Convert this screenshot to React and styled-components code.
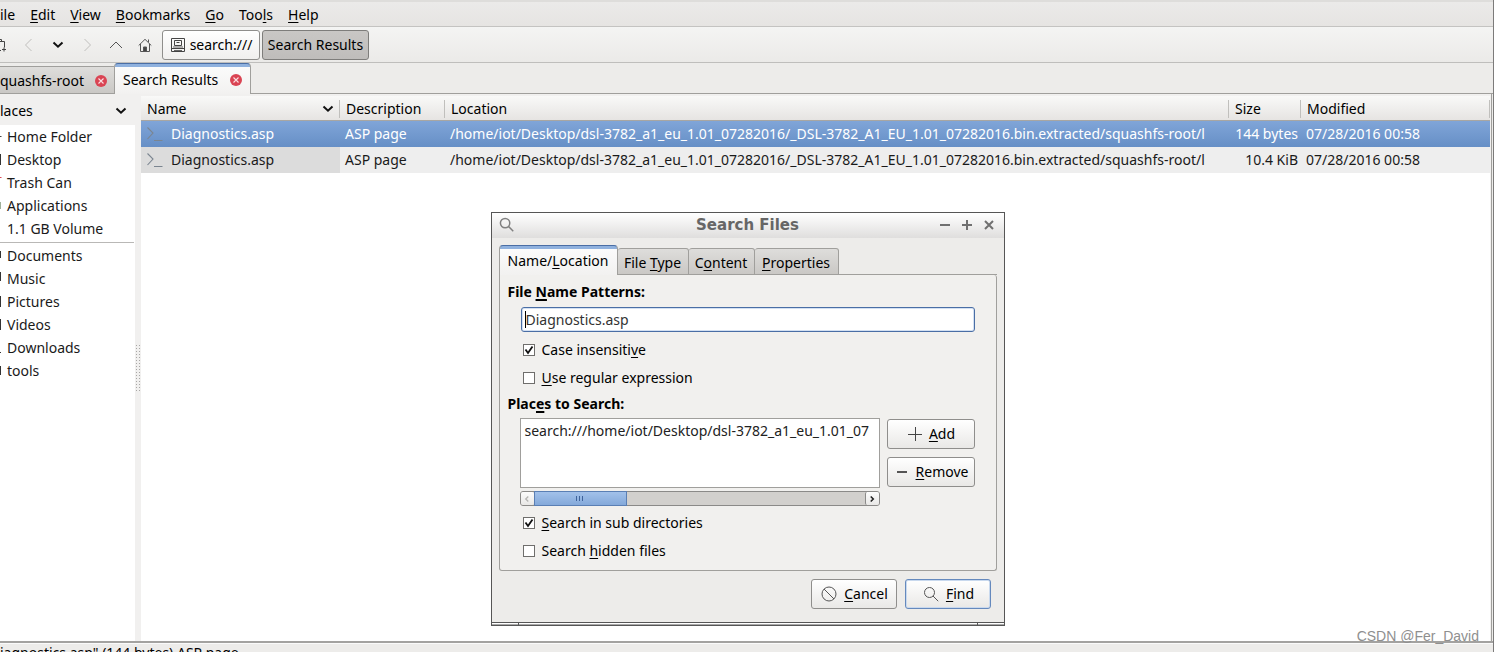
import React from "react";
import styled, { createGlobalStyle, css } from "styled-components";

const Global = createGlobalStyle`
  * { box-sizing: border-box; }
  body { margin: 0; overflow: hidden; }
  body, button, input, table {
    font-family: "Noto Sans", "Open Sans", sans-serif;
    font-size: 14px;
    line-height: 20px;
    color: #1a1a1a;
  }
  u { text-underline-offset: 2px; text-decoration-thickness: 1px; }
  svg { display: block; flex: none; }
`;

const Window = styled.div`
  position: relative;
  height: 100vh;
  display: flex;
  flex-direction: column;
  overflow: hidden;
  background: #edecea;
  border-right: 1px solid #7c7b7a;
`;

const MenuBar = styled.nav`
  display: flex;
  flex: none;
  align-items: flex-start;
  gap: 15px;
  height: 27px;
  padding-top: 3px;
  border-top: 2px solid #dedddb;
  border-bottom: 1px solid #c4c3c1;
  background: linear-gradient(#ebeae9, #e6e4e2);
`;

const MenuItem = styled.button`
  padding: 0;
  border: 0;
  background: none;
  color: #000;
`;

const Toolbar = styled.div`
  display: flex;
  flex: none;
  align-items: center;
  height: 36px;
  border-bottom: 1px solid #bfbebc;
  background: linear-gradient(#f4f4f3, #ebeae8);
`;

const ToolButton = styled.button`
  display: flex;
  align-items: center;
  justify-content: ${(p) => (p.$cut ? "flex-start" : "center")};
  width: ${(p) => (p.$cut ? 14 : 29)}px;
  height: 30px;
  padding: 0;
  border: 0;
  background: none;
`;

const PathBar = styled.div`
  display: flex;
  gap: 2px;
  margin-left: 3px;
`;

const PathButton = styled.button`
  display: flex;
  align-items: center;
  justify-content: center;
  gap: 4px;
  width: ${(p) => (p.$active ? 107 : 98)}px;
  height: 30px;
  padding: 0;
  white-space: nowrap;
  color: #000;
  border: 1px solid ${(p) => (p.$active ? "#7e7d7b" : "#8f8e8c")};
  border-radius: 3px;
  background: ${(p) =>
    p.$active ? "linear-gradient(#c9c7c5, #bfbdbb)" : "linear-gradient(#ffffff, #f0efee)"};
`;

const TabRow = styled.div`
  display: flex;
  flex: none;
  align-items: flex-end;
  height: 31px;
`;

const tabFace = css`
  border: 1px solid #a09f9c;
  border-radius: 3px 3px 0 0;
  background: linear-gradient(#dedddb, #cac8c5);
`;

const activeFace = css`
  border: 1px solid #a09f9c;
  border-top-color: #4a6ea5;
  border-bottom: 0;
  border-radius: 4px 4px 0 0;
  background: linear-gradient(#8fb1de 0 3px, #fbfbfb 3px, #f2f1f0);
`;

const FileTab = styled.button`
  ${(p) => (p.$active ? activeFace : tabFace)}
  display: flex;
  align-items: center;
  gap: 9px;
  width: ${(p) => (p.$active ? 137 : 114)}px;
  height: ${(p) => (p.$active ? 31 : 28)}px;
  padding: ${(p) => (p.$active ? "2px 8px 0 8px" : "1px 7px 0 0")};
  justify-content: space-between;
  white-space: nowrap;
  color: #000;
  ${(p) => !p.$active && "border-left: 0; border-right: 0; border-radius: 0;"}
`;

const TabFill = styled.div`
  flex: 1;
  height: 1px;
  background: #a09f9c;
`;

const Main = styled.div`
  display: flex;
  flex: 1;
  min-height: 0;
  margin-right: 1px;
  border-right: 1px solid #a09f9c;
  background: #f1f0ef;
`;

const SidePane = styled.aside`
  display: flex;
  flex-direction: column;
  width: 135px;
`;

const PaneHeader = styled.div`
  display: flex;
  align-items: center;
  justify-content: space-between;
  height: 31px;
  padding: 2px 7px 0 0;
  color: #000;
`;

const PlaceList = styled.ul`
  flex: 1;
  margin: 0;
  padding: 0;
  list-style: none;
  background: #fff;
`;

const Place = styled.li`
  display: flex;
  align-items: center;
  gap: 5px;
  height: 23px;
  white-space: nowrap;
  ${(p) =>
    p.$divided &&
    css`
      height: 25px;
      margin: 2px 1px 0 0;
      padding-top: 1px;
      border-top: 1px solid #b9b8b6;
    `}
`;

const Sash = styled.div`
  display: flex;
  align-items: center;
  justify-content: flex-start;
  width: 6px;
`;

const ListPane = styled.main`
  flex: 1;
  min-width: 0;
  margin-right: 1px;
  padding-top: 2px;
  background: linear-gradient(#f1f0ef 0 2px, #fff 2px);
`;

const Files = styled.table`
  width: 100%;
  table-layout: fixed;
  border-collapse: separate;
  border-spacing: 0;
`;

const Col = styled.col`
  width: ${(p) => p.$w};
`;

const Th = styled.th`
  height: 25px;
  padding: 1px 5px 0 6px;
  text-align: left;
  font-weight: 400;
  color: #000;
  white-space: nowrap;
  border-bottom: 1px solid #a8a6a2;
  background:
    linear-gradient(#c0bfbc, #c0bfbc) right 4px / 1px 18px no-repeat,
    linear-gradient(#f9f9f8, #e6e4e2);
`;

const HeadCell = styled.span`
  display: flex;
  align-items: center;
  justify-content: space-between;
`;

const Row = styled.tr`
  color: ${(p) => (p.$selected ? "#fff" : "#1a1a1a")};
  background: ${(p) => (p.$selected ? "linear-gradient(#80a5d8, #668fc6)" : "#eeeeee")};
  td:first-child { background: ${(p) => (p.$selected ? "none" : "#dcdcdc")}; }
`;

const Td = styled.td`
  height: 26px;
  padding: 0 0 0 5px;
  overflow: hidden;
  white-space: nowrap;
  text-align: ${(p) => (p.$right ? "right" : "left")};
  ${(p) => p.$right && "padding: 0 3px 0 0;"}
`;

const NameCell = styled.span`
  display: flex;
  align-items: center;
  gap: 8px;
`;

const StatusBar = styled.footer`
  flex: none;
  height: 11px;
  border-top: 2px solid #a3a2a0;
  background: linear-gradient(#fafafa 0 1px, #edecea 1px);
  white-space: nowrap;
  color: #000;
`;

const Watermark = styled.div`
  position: absolute;
  right: 14px;
  bottom: 6px;
  font-family: "Liberation Sans", sans-serif;
  font-size: 14px;
  line-height: 20px;
  color: #8f8f8f;
`;

const Dialog = styled.section`
  position: absolute;
  top: 212px;
  left: calc(50% - 256px);
  width: 514px;
  border: 1px solid #565656;
  background: #edecea;
`;

const TitleBar = styled.header`
  display: flex;
  align-items: center;
  justify-content: space-between;
  height: 25px;
  padding: 0 8px 2px 7px;
  background: linear-gradient(#ffffff, #dfdedd);
`;

const Title = styled.h1`
  margin: 0 0 0 42px;
  font: bold 15px/20px "DejaVu Sans", sans-serif;
  color: #666;
`;

const Controls = styled.div`
  display: flex;
  gap: 10px;
  button { padding: 0; border: 0; background: none; }
`;

const DialogBody = styled.div`
  padding: 7px 7px 13px;
`;

const DialogTabs = styled.div`
  display: flex;
  align-items: flex-end;
  height: 30px;
`;

const DialogTab = styled.button`
  ${(p) => (p.$active ? activeFace : tabFace)}
  width: ${(p) => p.$w}px;
  height: ${(p) => (p.$active ? 30 : 27)}px;
  padding: ${(p) => (p.$active ? "0" : "2px 0 0")};
  white-space: nowrap;
  color: #000;
  ${(p) => !p.$active && "border-left: 0;"}
`;

const Panel = styled.div`
  height: 296px;
  padding: 7px 21px 0 8px;
  border: 1px solid #a09f9c;
  border-top: 0;
  border-radius: 0 3px 3px 3px;
  background: #f1f0ee;
`;

const Legend = styled.label`
  display: block;
  height: 20px;
  font-weight: 700;
  color: #000;
  u { text-decoration-thickness: 2px; }
`;

const Group = styled.div`
  padding-left: 12px;
`;

const Field = styled.div`
  position: relative;
  margin: 5px 0 4px 1px;
`;

const TextInput = styled.input`
  display: block;
  width: 100%;
  height: 25px;
  padding: 0 4px;
  border: 1px solid #4a6ea5;
  border-radius: 3px;
  outline: 0;
  color: #333;
  background: #fff;
  box-shadow: inset 0 0 0 1px #d3e0f2;
`;

const Caret = styled.span`
  position: absolute;
  top: 4px;
  left: 4px;
  width: 1px;
  height: 17px;
  background: #000;
`;

const Check = styled.label`
  display: flex;
  align-items: center;
  gap: 7px;
  height: 28px;
  padding-left: 3px;
  color: #000;
`;

const Tick = styled.input`
  appearance: none;
  width: 12px;
  height: 12px;
  margin: 0;
  border: 1px solid #6f6e6c;
  background: #fff;
`;

const TickBox = styled.span`
  position: relative;
  display: flex;
  svg { position: absolute; inset: 0; pointer-events: none; }
`;

const PlacesRow = styled.div`
  display: flex;
  gap: 7px;
  margin: 4px 0 3px;
`;

const PlacesBox = styled.div`
  flex: 1;
  min-width: 0;
`;

const PathList = styled.div`
  height: 70px;
  padding: 2px 4px;
  overflow: hidden;
  white-space: nowrap;
  border: 1px solid #a09f9c;
  color: #222;
  background: #fff;
`;

const ScrollBar = styled.div`
  display: flex;
  height: 15px;
  margin-top: 3px;
  border: 1px solid #8b8a88;
  border-radius: 3px;
  background: #d2d0cd;
`;

const ScrollEnd = styled.button`
  display: flex;
  align-items: center;
  justify-content: center;
  width: ${(p) => (p.$last ? 14 : 13)}px;
  padding: 0;
  border: 0;
  border-radius: 2px;
  background: linear-gradient(#fcfcfc, #e9e8e6);
  ${(p) => p.$last && "margin-left: auto; border-left: 1px solid #8b8a88;"}
`;

const Thumb = styled.div`
  display: flex;
  align-items: center;
  justify-content: center;
  width: 93px;
  height: 15px;
  margin-top: -1px;
  border: 1px solid #5a7fb4;
  background: linear-gradient(#a2c1ea, #84a9da);
`;

const ButtonColumn = styled.div`
  display: flex;
  flex-direction: column;
  gap: 8px;
  margin-top: 1px;
`;

const PushButton = styled.button`
  display: flex;
  align-items: center;
  justify-content: center;
  gap: 7px;
  width: ${(p) => p.$w}px;
  height: 30px;
  padding: 0 0 0 2px;
  white-space: nowrap;
  color: #000;
  border: 1px solid ${(p) => (p.$default ? "#6589bd" : "#8f8e8c")};
  border-radius: 3px;
  background: linear-gradient(#ffffff, #e9e8e6);
  box-shadow: ${(p) => (p.$default ? "inset 0 0 0 1px #c9d9ee" : "none")};
`;

const Actions = styled.div`
  display: flex;
  justify-content: flex-end;
  gap: 8px;
  margin: 8px 6px 0 0;
`;

const Grip = styled.div`
  display: flex;
  justify-content: space-between;
  height: 3px;
  border-top: 1px solid #565656;
  background: linear-gradient(#fff 0 1px, #a9a9a9 1px);
  &::before, &::after {
    content: "";
    width: 26px;
    border-right: 1px solid #565656;
  }
  &::after { border-right: 0; border-left: 1px solid #565656; }
`;

const Chevron = ({ d, c = "#444", w = 1, s = 14 }) => (
  <svg width={s} height="14" viewBox="0 0 14 14" fill="none" stroke={c} strokeWidth={w}>
    <path d={d} />
  </svg>
);

const DownArrow = () => <Chevron d="M2.5 4.5 7 8.7l4.5-4.2" c="#111" w={2} />;

const CloseBadge = () => (
  <svg width="12" height="12" viewBox="0 0 12 12">
    <circle cx="6" cy="6" r="6" fill="#da4453" />
    <path d="M3.5 3.5l5 5M8.5 3.5l-5 5" stroke="#fbdfe2" strokeWidth="1.1" />
  </svg>
);

const Prompt = () => (
  <svg width="17" height="16" viewBox="0 0 17 16" fill="none" stroke="#7b8590" strokeWidth="1.1">
    <path d="M1.5 1.500l5.500 5.500-5.500 6M8 14.500h8.500" />
  </svg>
);

const Magnifier = ({ size = 16, w = 1, c = "#555" }) => (
  <svg width={size} height={size} viewBox="0 0 16 16" fill="none" stroke={c} strokeWidth={w}>
    <circle cx="6.500" cy="6.500" r="5" />
    <path d="M10 10l5.200 5.200" />
  </svg>
);

const TickMark = () => (
  <svg width="12" height="12" viewBox="0 0 12 12" fill="none" stroke="#111" strokeWidth="1.800">
    <path d="M2.500 5.500l2.500 3.500 4.500-6.500" />
  </svg>
);

const CheckRow = ({ checked, children }) => (
  <Check>
    <TickBox>
      <Tick type="checkbox" defaultChecked={checked} />
      {checked && <TickMark />}
    </TickBox>
    <span>{children}</span>
  </Check>
);

const PATH =
  "/home/iot/Desktop/dsl-3782_a1_eu_1.01_07282016/_DSL-3782_A1_EU_1.01_07282016.bin.extracted/squashfs-root/l";

const files = [
  { name: "Diagnostics.asp", size: "144 bytes", selected: true },
  { name: "Diagnostics.asp", size: "10.4 KiB" },
];

const places = [
  ["Home Folder", "M0 7.500h1.500", "#444"],
  ["Desktop", "M0.500 2v11", "#333"],
  ["Trash Can", "M0 2.500h1.500", "#da4453"],
  ["Applications", "M0.500 4v7", "#9fb09a"],
  ["1.1 GB Volume", "", "none"],
  ["Documents", "M0.500 3v7", "#333"],
  ["Music", "M0.500 1v9", "#333"],
  ["Pictures", "M0.500 2v11", "#333"],
  ["Videos", "M0.500 2v11", "#333"],
  ["Downloads", "M0 12.500h1", "#333"],
  ["tools", "M0.500 3v9", "#333"],
];

export default function App() {
  return (
    <>
      <Global />
      <Window>
        <MenuBar>
          <MenuItem>ile</MenuItem>
          <MenuItem><u>E</u>dit</MenuItem>
          <MenuItem><u>V</u>iew</MenuItem>
          <MenuItem><u>B</u>ookmarks</MenuItem>
          <MenuItem><u>G</u>o</MenuItem>
          <MenuItem>Too<u>l</u>s</MenuItem>
          <MenuItem><u>H</u>elp</MenuItem>
        </MenuBar>
        <Toolbar>
          <ToolButton $cut aria-label="New tab">
            <svg width="7" height="16" viewBox="0 0 7 16" fill="none" stroke="#444">
              <path d="M0 2.500h1.500v2M0 4.500h4.500v6M0 13.500h1M2 12.500h4M4 10.500v4" />
            </svg>
          </ToolButton>
          <ToolButton aria-label="Back"><Chevron d="M9.500 1 3.500 7l6 6" c="#c0bfbd" /></ToolButton>
          <ToolButton aria-label="History"><DownArrow /></ToolButton>
          <ToolButton aria-label="Forward"><Chevron d="M4.500 1l6 6-6 6" c="#c0bfbd" /></ToolButton>
          <ToolButton aria-label="Up"><Chevron d="M1 10l6-6 6 6" c="#555" /></ToolButton>
          <ToolButton aria-label="Home">
            <svg width="14" height="14" viewBox="0 0 14 14" fill="none" stroke="#555">
              <path d="M0.700 7.500 7 1.300l6.300 6.200M2.500 6v7.500h9V6M10.500 4V1.500" />
              <path d="M5.500 9h3v4.500h-3z" fill="#444" />
            </svg>
          </ToolButton>
          <PathBar>
            <PathButton>
              <svg width="16" height="16" viewBox="0 0 16 16" fill="none" stroke="#444">
                <path d="M1.500 1.500h13v13h-13zM4.500 3.500h7v5h-7zM6.500 5.500h3M1.500 11.500h13" />
                <path d="M3 10h10M4 13.500h8" stroke="#666" />
              </svg>
              search:///
            </PathButton>
            <PathButton $active>Search Results</PathButton>
          </PathBar>
        </Toolbar>
        <TabRow>
          <FileTab>quashfs-root<CloseBadge /></FileTab>
          <FileTab $active>Search Results<CloseBadge /></FileTab>
          <TabFill />
        </TabRow>
        <Main>
          <SidePane>
            <PaneHeader>laces<DownArrow /></PaneHeader>
            <PlaceList>
              {places.map(([name, d, c], i) => (
                <Place key={name} $divided={i === 5}>
                  <svg width="2" height="16" viewBox="0 0 2 16" fill="none" stroke={c}>
                    <path d={d} />
                  </svg>
                  {name}
                </Place>
              ))}
            </PlaceList>
          </SidePane>
          <Sash>
            <svg width="5" height="46" viewBox="0 0 5 46">
              <path
                d="M1.500 0v46M4.500 0v46"
                stroke="#a8a7a5"
                strokeDasharray="1 2"
              />
            </svg>
          </Sash>
          <ListPane>
            <Files>
              <colgroup>
                <Col $w="199px" />
                <Col $w="105px" />
                <Col $w="auto" />
                <Col $w="72px" />
                <Col $w="189px" />
              </colgroup>
              <thead>
                <tr>
                  <Th><HeadCell>Name<DownArrow /></HeadCell></Th>
                  <Th>Description</Th>
                  <Th>Location</Th>
                  <Th>Size</Th>
                  <Th>Modified</Th>
                </tr>
              </thead>
              <tbody>
                {files.map((f) => (
                  <Row key={f.size} $selected={f.selected}>
                    <Td><NameCell><Prompt />{f.name}</NameCell></Td>
                    <Td>ASP page</Td>
                    <Td>{PATH}</Td>
                    <Td $right>{f.size}</Td>
                    <Td>07/28/2016 00:58</Td>
                  </Row>
                ))}
              </tbody>
            </Files>
          </ListPane>
        </Main>
        <StatusBar>iagnostics.asp" (144 bytes) ASP page</StatusBar>
        <Dialog aria-label="Search Files">
          <TitleBar>
            <Magnifier size={15} w={1.6} c="#808080" />
            <Title>Search Files</Title>
            <Controls>
              {[
                ["Minimize", "M1 6h10"],
                ["Maximize", "M1 6h10M6 1v10"],
                ["Close", "M2 2l8 8M10 2l-8 8"],
              ].map(([n, d]) => (
                <button key={n} aria-label={n}>
                  <svg width="12" height="12" viewBox="0 0 12 12" stroke="#707070" strokeWidth="2">
                    <path d={d} />
                  </svg>
                </button>
              ))}
            </Controls>
          </TitleBar>
          <DialogBody>
            <DialogTabs>
              <DialogTab $active $w={119}>Name/<u>L</u>ocation</DialogTab>
              <DialogTab $w={71}>File <u>T</u>ype</DialogTab>
              <DialogTab $w={66}>C<u>o</u>ntent</DialogTab>
              <DialogTab $w={84}><u>P</u>roperties</DialogTab>
              <TabFill />
            </DialogTabs>
            <Panel>
              <Legend htmlFor="patterns">File <u>N</u>ame Patterns:</Legend>
              <Group>
                <Field>
                  <TextInput id="patterns" defaultValue="Diagnostics.asp" />
                  <Caret />
                </Field>
                <CheckRow checked>Case insensiti<u>v</u>e</CheckRow>
                <CheckRow><u>U</u>se regular expression</CheckRow>
              </Group>
              <Places>
                <Legend as="div">Plac<u>e</u>s to Search:</Legend>
                <Group>
                  <PlacesRow>
                    <PlacesBox>
                      <PathList>search:///home/iot/Desktop/dsl-3782_a1_eu_1.01_07</PathList>
                      <ScrollBar>
                        <ScrollEnd aria-label="Scroll left">
                          <Chevron d="M8.500 4 5.500 7l3 3" c="#b5b4b2" w={1.5} s={12} />
                        </ScrollEnd>
                        <Thumb>
                          <svg width="8" height="5" viewBox="0 0 8 5" stroke="#3f639b">
                            <path d="M0.500 0v5M3.500 0v5M6.500 0v5" />
                          </svg>
                        </Thumb>
                        <ScrollEnd $last aria-label="Scroll right">
                          <Chevron d="M5.500 4l3 3-3 3" c="#222" w={1.8} s={12} />
                        </ScrollEnd>
                      </ScrollBar>
                    </PlacesBox>
                    <ButtonColumn>
                      <PushButton $w={88}>
                        <Chevron d="M0 7.500h14M7.500 0v14" />
                        <span><u>A</u>dd</span>
                      </PushButton>
                      <PushButton $w={88}>
                        <svg width="14" height="14" viewBox="0 0 14 14" stroke="#555" strokeWidth="2">
                          <path d="M2 7h10" />
                        </svg>
                        <span><u>R</u>emove</span>
                      </PushButton>
                    </ButtonColumn>
                  </PlacesRow>
                  <CheckRow checked><u>S</u>earch in sub directories</CheckRow>
                  <CheckRow>Search <u>h</u>idden files</CheckRow>
                </Group>
              </Places>
            </Panel>
            <Actions>
              <PushButton $w={86}>
                <svg width="16" height="16" viewBox="0 0 16 16" fill="none" stroke="#555">
                  <circle cx="8" cy="8" r="7" />
                  <path d="M3 3l10 10" />
                </svg>
                <span><u>C</u>ancel</span>
              </PushButton>
              <PushButton $w={86} $default>
                <Magnifier />
                <span><u>F</u>ind</span>
              </PushButton>
            </Actions>
          </DialogBody>
          <Grip />
        </Dialog>
        <Watermark>CSDN @Fer_David</Watermark>
      </Window>
    </>
  );
}

const Places = styled.section`
  margin-top: 2px;
`;
